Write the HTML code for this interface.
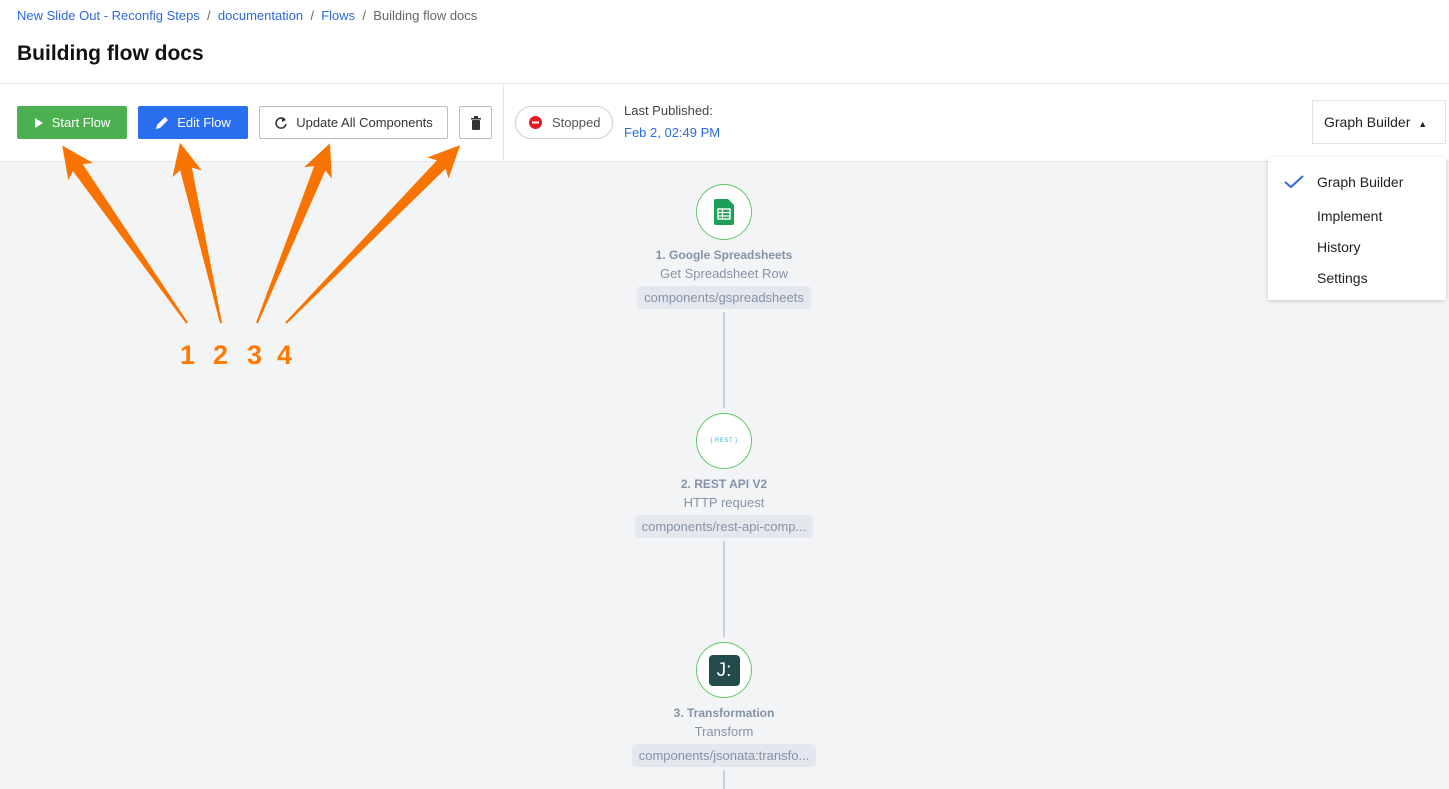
<!DOCTYPE html>
<html><head><meta charset="utf-8"><style>
*{box-sizing:border-box;margin:0;padding:0}
body{width:1449px;height:789px;overflow:hidden;font-family:"Liberation Sans",Arial,sans-serif;background:#f3f4f6;position:relative}
.top{position:absolute;left:0;top:0;width:1449px;height:162px;background:#fff;border-bottom:1px solid #e3e5e8}
.bc{position:absolute;left:17px;top:8px;font-size:13px;color:#666}
.bc a{color:#2d6ae3;text-decoration:none}
h1{position:absolute;left:17px;top:42px;font-size:21px;font-weight:bold;color:#111}
.hr{position:absolute;left:0;top:83px;width:1449px;border-top:1px solid #e6e6e6}
.btn{position:absolute;top:106px;height:33px;font-size:13px;display:flex;align-items:center;justify-content:center;gap:8px;border-radius:2px}
.vs{position:absolute;left:503px;top:84px;height:78px;border-left:1px solid #e6e6e6}
.node{position:absolute;left:574px;width:300px;text-align:center}
.circ{width:56px;height:56px;border:1px solid #5fc86a;border-radius:50%;background:#fff;margin:0 auto;display:flex;align-items:center;justify-content:center}
.t{font-size:12px;font-weight:bold;color:#8593a8;margin-top:8px}
.s{font-size:13px;color:#8593a8;margin-top:4px}
.p{display:inline-block;background:#e4e7ed;color:#8593a8;font-size:13px;padding:4px 7px;border-radius:4px;margin-top:5px}
.line{position:absolute;left:723px;width:2px;background:#ccd2dc}
.menu{position:absolute;left:1268px;top:157px;width:178px;height:143px;background:#fff;box-shadow:0 1px 4px rgba(0,0,0,.18)}
.menu div{position:absolute;left:49px;font-size:14px;color:#222}
</style></head><body>
<div class="top">
<div class="bc"><a>New Slide Out - Reconfig Steps</a> &nbsp;/&nbsp; <a>documentation</a> &nbsp;/&nbsp; <a>Flows</a> &nbsp;/&nbsp; Building flow docs</div>
<h1>Building flow docs</h1>
<div class="hr"></div>
<div class="btn" style="left:17px;width:110px;background:#4caf50;color:#fff"><svg width="10" height="12"><path d="M1 1L9 6L1 11Z" fill="#fff"/></svg>Start Flow</div>
<div class="btn" style="left:138px;width:110px;background:#2a6ef0;color:#fff"><svg width="14" height="14"><path d="M1 13L2 9L10 1L13 4L5 12Z" fill="#fff"/></svg>Edit Flow</div>
<div class="btn" style="left:259px;width:189px;border:1px solid #bbb;color:#333;background:#fff"><svg width="14" height="14"><path d="M11 4A5 5 0 1 0 12 8" stroke="#333" stroke-width="1.6" fill="none"/><path d="M8 1L12 4L8 6Z" fill="#333"/></svg>Update All Components</div>
<div class="btn" style="left:459px;width:33px;border:1px solid #bbb;background:#fff"><svg width="10" height="14"><rect x="0" y="2" width="10" height="1.5" fill="#333"/><rect x="3" y="0" width="4" height="2" fill="#333"/><rect x="1" y="4" width="8" height="10" rx="1" fill="#333"/></svg></div>
<div class="vs"></div>
<div style="position:absolute;left:515px;top:106px;width:98px;height:33px;border:1px solid #ccc;border-radius:17px;display:flex;align-items:center;padding-left:13px;gap:10px;font-size:13px;color:#555"><svg width="13" height="13"><circle cx="6.5" cy="6.5" r="6.5" fill="#e31b23"/><rect x="3" y="5.5" width="7" height="2" fill="#fff"/></svg>Stopped</div>
<div style="position:absolute;left:624px;top:103px;font-size:13px;color:#444">Last Published:</div>
<div style="position:absolute;left:624px;top:125px;font-size:13px;color:#2d6ae3">Feb 2, 02:49 PM</div>
<div style="position:absolute;left:1312px;top:100px;width:134px;height:44px;border:1px solid #e2e2e2;font-size:14px;color:#222;padding:13px 0 0 11px">Graph Builder <span style="font-size:9px;margin-left:4px">▲</span></div>
</div>
<div class="menu">
<svg style="position:absolute;left:16px;top:18px" width="20" height="14"><path d="M1 7L7 12L19 1" stroke="#2d6ae3" stroke-width="2" fill="none"/></svg>
<div style="top:17px">Graph Builder</div><div style="top:51px">Implement</div><div style="top:82px">History</div><div style="top:113px">Settings</div>
</div>
<div class="line" style="top:312px;height:96px"></div>
<div class="line" style="top:541px;height:96px"></div>
<div class="line" style="top:770px;height:19px"></div>
<div class="node" style="top:184px"><div class="circ"><svg width="20" height="26"><path d="M0 2Q0 0 2 0H14L20 6V24Q20 26 18 26H2Q0 26 0 24Z" fill="#1e9f57"/><rect x="4" y="10" width="12" height="10" fill="none" stroke="#fff" stroke-width="1.4"/><path d="M4 13.5H16M4 17H16M8.5 10V20" stroke="#fff" stroke-width="1.2"/></svg></div><div class="t">1. Google Spreadsheets</div><div class="s">Get Spreadsheet Row</div><div class="p">components/gspreadsheets</div></div>
<div class="node" style="top:413px"><div class="circ"><span style="font-size:6px;color:#3aaed8;letter-spacing:.5px">{ REST }</span></div><div class="t">2. REST API V2</div><div class="s">HTTP request</div><div class="p">components/rest-api-comp...</div></div>
<div class="node" style="top:642px"><div class="circ"><div style="width:31px;height:31px;background:#244b4b;border-radius:4px;color:#fff;font-size:19px;line-height:31px">J:</div></div><div class="t">3. Transformation</div><div class="s">Transform</div><div class="p">components/jsonata:transfo...</div></div>
<svg style="position:absolute;left:0;top:0" width="600" height="400">
<g fill="#f97300">
<polygon transform="translate(187,323) rotate(-125.1)" points="0,-1 190,-6 185,-15 217,0 185,15 190,6 0,1"/>
<polygon transform="translate(221,323) rotate(-102.8)" points="0,-1 158,-6 153,-15 185,0 153,15 158,6 0,1"/>
<polygon transform="translate(257,323) rotate(-67.9)" points="0,-1 167,-6 162,-15 194,0 162,15 167,6 0,1"/>
<polygon transform="translate(286,323) rotate(-45.6)" points="0,-1 222,-6 217,-15 249,0 217,15 222,6 0,1"/>
</g>
<g font-family="Liberation Sans,sans-serif" font-size="27" font-weight="bold" fill="#ff7a00"><text x="180" y="364">1</text><text x="213" y="364">2</text><text x="247" y="364">3</text><text x="277" y="364">4</text></g>
</svg>
</body></html>
